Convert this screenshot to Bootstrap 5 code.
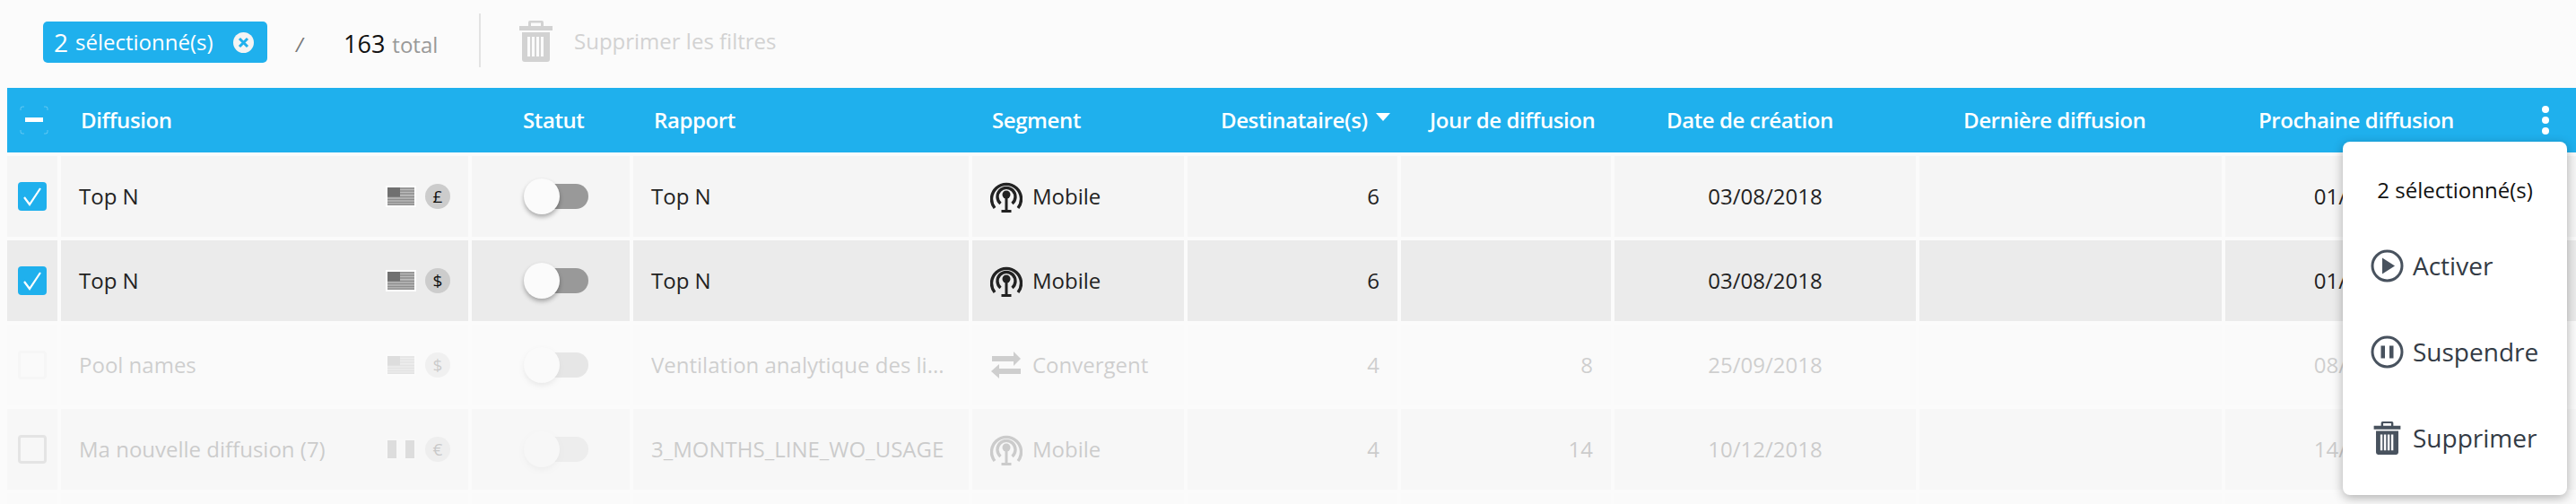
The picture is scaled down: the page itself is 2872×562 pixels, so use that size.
<!DOCTYPE html>
<html lang="fr">
<head>
  <meta charset="UTF-8">
  <title>Diffusions</title>
  <link href="https://cdn.jsdelivr.net/npm/bootstrap@5.3.2/dist/css/bootstrap.min.css" rel="stylesheet">
  <style>
    body {
      background: #fbfbfb;
      font-family: "Open Sans", "Liberation Sans", sans-serif;
      font-size: 24px;
      color: #222;
      overflow: hidden;
    }

    /* Top bar */
    .top-bar { height: 98px; padding-left: 48px; }
    .sel-chip {
      width: 250px;
      height: 46px;
      padding: 0 15px 0 12px;
      background: #1fb0ed;
      color: #fff;
      border-radius: 5px;
      font-size: 24px;
      margin-top: -4px;
    }
    .sel-chip b { font-weight: 400; font-size: 28px; margin-right: 8px; }
    .chip-x { width: 23px; height: 23px; }
    .top-slash { margin-left: 32px; width: 53px; color: #777; font-style: italic; font-size: 22px; }
    .top-count { font-size: 27px; color: #111; width: 151px; }
    .top-count span { font-size: 24px; color: #999; margin-left: 8px; }
    .top-div { width: 2px; height: 60px; background: #e3e3e3; margin-top: -8px; margin-right: 43px; }
    .top-clear { color: #d2d2d2; font-size: 24px; margin-top: -6px; }
    .top-clear svg { width: 37px; height: 46px; margin-right: 24px; }

    /* Table */
    .sheet { margin-left: 8px; position: relative; }
    .grid-line {
      display: grid;
      grid-template-columns: 56px 454px 176px 374px 236px 234px 234px 336px 337px 325px 62px;
      column-gap: 4px;
      align-items: stretch;
    }
    .head-line {
      height: 72px;
      background: #1fb0ed;
      color: #fff;
      font-weight: 600;
      font-size: 24px;
      margin-bottom: 4px;
    }
    .head-line > div { display: flex; align-items: center; white-space: nowrap; letter-spacing: -.4px; }
    .head-line > div:nth-child(2) { padding-left: 22px; }
    .head-line > div:nth-child(3) { padding-left: 57px; }
    .head-line > div:nth-child(4) { padding-left: 23px; }
    .head-line > div:nth-child(5) { padding-left: 22px; }
    .head-line > div:nth-child(6) { padding-left: 37px; }
    .head-line > div:nth-child(7) { padding-left: 32px; }
    .head-line > div:nth-child(8) { padding-left: 58px; }
    .head-line > div:nth-child(9) { padding-left: 49px; }
    .head-line > div:nth-child(10) { padding-left: 37px; }
    .sort-arrow {
      width: 0; height: 0; margin: -8px 0 0 9px;
      border-left: 8px solid transparent;
      border-right: 8px solid transparent;
      border-top: 9px solid #fff;
    }
    .head-check { width: 32px; height: 32px; margin-left: 14px; }
    .kebab { width: 8px; height: 32px; margin-left: 24px; }

    .data-line { height: 90px; margin-bottom: 4px; }
    .last-line { height: 12px; margin-bottom: 0; }
    .data-line > div { display: flex; align-items: center; min-width: 0; }
    .line-a > div { background: #f5f5f5; }
    .line-b > div { background: #ebebeb; }
    .line-c > div { background: #fafafa; }
    .line-d > div { background: #f7f7f7; }
    .line-c > div > *, .line-d > div > * { opacity: .2; }
    .line-d > div > .toggle-box { opacity: .1; }
    .cell-name { padding: 0 20px 0 20px; justify-content: space-between; }
    .cell-text { padding-left: 20px; white-space: nowrap; }
    .cell-num { padding-right: 20px; justify-content: flex-end; }
    .cell-date { justify-content: center; }

    .tick {
      width: 32px; height: 32px; margin-left: 12px;
      background: #1fb0ed; border-radius: 4px;
    }
    .tick-off { background: transparent; border: 3px solid #999; }
    .line-c > div > .tick-off { opacity: .04; }
    .tick svg { display: block; width: 32px; height: 32px; }
    .flag-coin { gap: 10px; }
    .flag-mark { width: 34px; height: 24px; display: block; }
    .coin {
      width: 28px; height: 28px; border-radius: 50%;
      background: #ccc; color: #111; font-size: 19px; line-height: 28px; text-align: center;
    }
    .toggle-box { position: relative; width: 72px; height: 40px; margin-left: 58px; }
    .toggle-track {
      position: absolute; left: 16px; top: 6px;
      width: 56px; height: 28px; border-radius: 14px; background: #999;
    }
    .toggle-thumb {
      position: absolute; left: 0; top: 0;
      width: 40px; height: 40px; border-radius: 50%;
      background: #fbfbfb; box-shadow: 0 3px 5px rgba(0, 0, 0, .3);
    }
    .seg-icon { width: 36px; height: 36px; margin-right: 11px; flex: none; }
    .cell-seg { padding-left: 20px; }
    .cell-seg > span { display: flex; align-items: center; }

    /* Actions menu */
    .sel-menu {
      position: absolute;
      right: 10px;
      top: 60px;
      left: auto;
      width: 250px;
      height: 394px;
      padding: 0;
      border: 0;
      border-radius: 8px;
      background: #fff;
      box-shadow: 0 3px 12px rgba(0, 0, 0, .3);
      font-size: 24px;
    }
    .menu-title { height: 90px; padding-top: 18px; color: #111; }
    .sel-menu .dropdown-item {
      height: 96px;
      padding: 0 0 0 31px;
      font-size: 28px;
      color: #333b45;
    }
    .menu-icon { width: 37px; height: 37px; margin-right: 10px; flex: none; color: #48525e; }
  </style>
</head>
<body>
  <svg width="0" height="0" class="position-absolute">
    <defs>
      <symbol id="i-trash" viewBox="0 0 37 46">
        <path fill="currentColor" fill-rule="evenodd" d="M12 0h13a2 2 0 0 1 2 2v4h10v5H0V6h10V2a2 2 0 0 1 2-2zm1 2.500V6h11V2.500zM3 13h31v30a3 3 0 0 1-3 3H6a3 3 0 0 1-3-3zm6 5v22h3V18zm5 0v22h3V18zm5 0v22h3V18zm5 0v22h3V18z"/>
      </symbol>
      <symbol id="i-antenna" viewBox="0 0 36 36">
        <g fill="none" stroke="currentColor" stroke-width="3.400">
          <path d="M5 31A16.500 16.500 0 1 1 31 31"/>
          <path d="M11.500 26A10 10 0 1 1 24.500 26"/>
        </g>
        <circle cx="18" cy="16" r="4.500" fill="currentColor"/>
        <path fill="currentColor" d="M16.500 18h3v15h4v3h-11v-3h4z"/>
      </symbol>
      <symbol id="i-swap" viewBox="0 0 36 36">
        <path fill="currentColor" d="M2 5h24V0l8 8-8 8v-5H2zM34 19v6H10v5l-9-8 9-8v5z" transform="translate(0 3)"/>
      </symbol>
      <symbol id="i-us" viewBox="0 0 34 24">
        <rect width="34" height="24" fill="#fff"/>
        <rect x="2" y="2" width="30" height="20" fill="#bbb"/>
        <path stroke="#8d8d8d" stroke-width="1.500" d="M16 3h16M16 6h16M16 9h16M2 12.500h30M2 15.500h30M2 18.500h30M2 21.300h30"/>
        <rect x="2" y="2" width="14" height="10.500" fill="#707070"/>
      </symbol>
      <symbol id="i-it" viewBox="0 0 34 24">
        <rect width="34" height="24" fill="#fff"/>
        <rect x="2" y="2" width="10" height="20" fill="#777"/>
        <rect x="22" y="2" width="10" height="20" fill="#777"/>
      </symbol>
      <symbol id="i-check" viewBox="0 0 32 32">
        <path fill="none" stroke="#fff" stroke-width="2.200" d="M7 17l6 8L25 7"/>
      </symbol>
    </defs>
  </svg>

  <div class="top-bar d-flex align-items-center">
    <div class="sel-chip d-flex align-items-center justify-content-between">
      <span class="d-flex align-items-center"><b>2</b>sélectionné(s)</span>
      <svg class="chip-x" viewBox="0 0 23 23"><circle cx="11.500" cy="11.500" r="11.500" fill="#f4f4f4"/><path d="M7 7l9 9M16 7l-9 9" stroke="#1fb0ed" stroke-width="3"/></svg>
    </div>
    <div class="top-slash">/</div>
    <div class="top-count">163<span>total</span></div>
    <div class="top-div"></div>
    <div class="top-clear d-flex align-items-center">
      <svg><use href="#i-trash"/></svg>
      Supprimer les filtres
    </div>
  </div>

  <div class="sheet">
    <div class="grid-line head-line">
      <div>
        <svg class="head-check" viewBox="0 0 32 32">
          <path fill="none" stroke="#fff" stroke-opacity=".3" stroke-width="1" d="M1 5V3a2 2 0 0 1 2-2h2M27 1h2a2 2 0 0 1 2 2v2M31 27v2a2 2 0 0 1-2 2h-2M5 31H3a2 2 0 0 1-2-2v-2"/>
          <rect x="6" y="13" width="20" height="5" fill="#fff"/>
        </svg>
      </div>
      <div>Diffusion</div>
      <div>Statut</div>
      <div>Rapport</div>
      <div>Segment</div>
      <div>Destinataire(s)<span class="sort-arrow"></span></div>
      <div>Jour de diffusion</div>
      <div>Date de création</div>
      <div>Dernière diffusion</div>
      <div>Prochaine diffusion</div>
      <div>
        <svg class="kebab" viewBox="0 0 8 32"><circle cx="4" cy="4" r="4" fill="#fff"/><circle cx="4" cy="16" r="4" fill="#fff"/><circle cx="4" cy="28" r="4" fill="#fff"/></svg>
      </div>
    </div>

    <div class="grid-line data-line line-a">
      <div><div class="tick"><svg><use href="#i-check"/></svg></div></div>
      <div class="cell-name"><span>Top N</span><span class="flag-coin d-flex align-items-center"><svg class="flag-mark"><use href="#i-us"/></svg><span class="coin">£</span></span></div>
      <div><div class="toggle-box"><div class="toggle-track"></div><div class="toggle-thumb"></div></div></div>
      <div class="cell-text"><span>Top N</span></div>
      <div class="cell-seg"><span><svg class="seg-icon"><use href="#i-antenna"/></svg>Mobile</span></div>
      <div class="cell-num"><span>6</span></div>
      <div></div>
      <div class="cell-date"><span>03/08/2018</span></div>
      <div></div>
      <div class="cell-date"><span>01/09/2018</span></div>
      <div></div>
    </div>

    <div class="grid-line data-line line-b">
      <div><div class="tick"><svg><use href="#i-check"/></svg></div></div>
      <div class="cell-name"><span>Top N</span><span class="flag-coin d-flex align-items-center"><svg class="flag-mark"><use href="#i-us"/></svg><span class="coin">$</span></span></div>
      <div><div class="toggle-box"><div class="toggle-track"></div><div class="toggle-thumb"></div></div></div>
      <div class="cell-text"><span>Top N</span></div>
      <div class="cell-seg"><span><svg class="seg-icon"><use href="#i-antenna"/></svg>Mobile</span></div>
      <div class="cell-num"><span>6</span></div>
      <div></div>
      <div class="cell-date"><span>03/08/2018</span></div>
      <div></div>
      <div class="cell-date"><span>01/09/2018</span></div>
      <div></div>
    </div>

    <div class="grid-line data-line line-c">
      <div><div class="tick tick-off"></div></div>
      <div class="cell-name"><span>Pool names</span><span class="flag-coin d-flex align-items-center"><svg class="flag-mark"><use href="#i-us"/></svg><span class="coin">$</span></span></div>
      <div><div class="toggle-box"><div class="toggle-track"></div><div class="toggle-thumb"></div></div></div>
      <div class="cell-text"><span>Ventilation analytique des li...</span></div>
      <div class="cell-seg"><span><svg class="seg-icon"><use href="#i-swap"/></svg>Convergent</span></div>
      <div class="cell-num"><span>4</span></div>
      <div class="cell-num"><span>8</span></div>
      <div class="cell-date"><span>25/09/2018</span></div>
      <div></div>
      <div class="cell-date"><span>08/10/2018</span></div>
      <div></div>
    </div>

    <div class="grid-line data-line line-d">
      <div><div class="tick tick-off"></div></div>
      <div class="cell-name"><span>Ma nouvelle diffusion (7)</span><span class="flag-coin d-flex align-items-center"><svg class="flag-mark"><use href="#i-it"/></svg><span class="coin">€</span></span></div>
      <div><div class="toggle-box"><div class="toggle-track"></div><div class="toggle-thumb"></div></div></div>
      <div class="cell-text"><span>3_MONTHS_LINE_WO_USAGE</span></div>
      <div class="cell-seg"><span><svg class="seg-icon"><use href="#i-antenna"/></svg>Mobile</span></div>
      <div class="cell-num"><span>4</span></div>
      <div class="cell-num"><span>14</span></div>
      <div class="cell-date"><span>10/12/2018</span></div>
      <div></div>
      <div class="cell-date"><span>14/12/2018</span></div>
      <div></div>
    </div>

    <div class="grid-line data-line last-line line-c"><div></div><div></div><div></div><div></div><div></div><div></div><div></div><div></div><div></div><div></div><div></div></div>

    <div class="dropdown-menu show sel-menu">
      <div class="menu-title d-flex align-items-center justify-content-center">2 sélectionné(s)</div>
      <a class="dropdown-item d-flex align-items-center" href="#">
        <svg class="menu-icon" viewBox="0 0 37 37"><circle cx="18.500" cy="18.500" r="16.500" fill="none" stroke="currentColor" stroke-width="3"/><path fill="currentColor" d="M13 9.500l14 9-14 9z"/></svg>
        Activer
      </a>
      <a class="dropdown-item d-flex align-items-center" href="#">
        <svg class="menu-icon" viewBox="0 0 37 37"><circle cx="18.500" cy="18.500" r="16.500" fill="none" stroke="currentColor" stroke-width="3"/><path fill="currentColor" d="M11.500 11.500h4.500v14h-4.500zM21 11.500h4.500v14H21z"/></svg>
        Suspendre
      </a>
      <a class="dropdown-item d-flex align-items-center" href="#">
        <svg class="menu-icon"><use href="#i-trash"/></svg>
        Supprimer
      </a>
    </div>
  </div>
</body>
</html>
